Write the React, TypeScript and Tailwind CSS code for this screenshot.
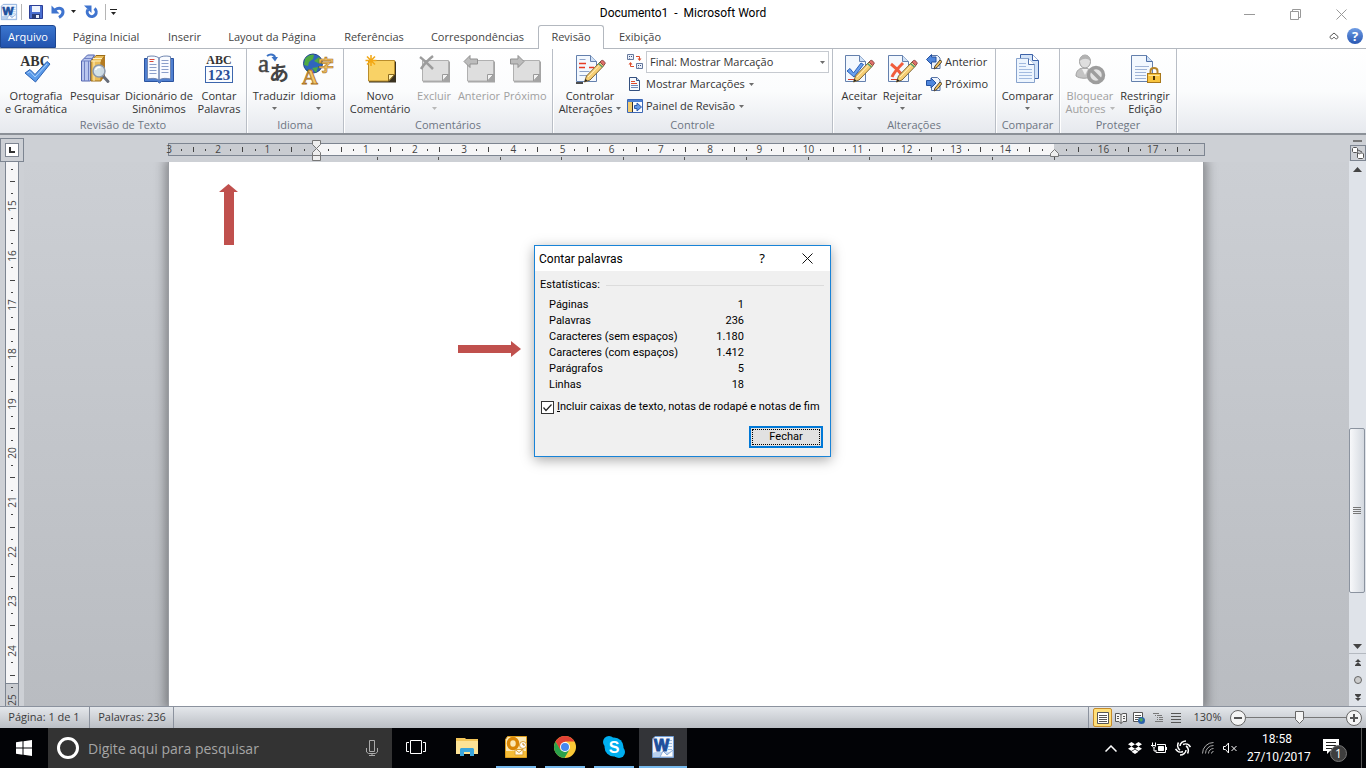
import type { ReactNode } from "react";

const quickAccess = "flex items-center justify-center";

function Caret({ className = "text-[#6d6d6d]" }: { className?: string }) {
  return (
    <svg viewBox="0 0 5 3" className={`h-[3px] w-[5px] shrink-0 ${className}`} fill="currentColor">
      <path d="M0 0h5L2.5 3z" />
    </svg>
  );
}

/* ---------- Icons ---------- */

function WordMark({ className }: { className: string }) {
  return (
    <svg viewBox="0 0 22 22" className={`overflow-visible ${className}`}>
      <path d="M3 .5h18.500v21H.5V3z" fill="#f1f6fd" stroke="#6f9bd3" />
      <path d="M16 4.500h4M16 7.500h4M16 10.500h4M16 13.500h4" stroke="#9cb9dd" />
      <path d="M1 17c6-3 12 1 20-2v6H1z" fill="#b9d0ee" />
      <path d="M11 15l4 4 6-5v7H8z" fill="#fff" stroke="#8fb0dc" />
      <text x="9.500" y="14.500" textAnchor="middle" fontFamily="Liberation Sans, sans-serif" fontWeight="bold" fontSize="16" fill="#1c4f9c" stroke="#1c4f9c">W</text>
    </svg>
  );
}

function SpellIcon() {
  return (
    <svg viewBox="0 0 32 32" className="size-8 overflow-visible">
      <text x="15" y="13" textAnchor="middle" fontFamily="Liberation Serif, serif" fontWeight="bold" fontSize="14" fill="#333">ABC</text>
      <path d="M5 20l5-3.500 5 5L27 8.500l3 2.500-14.500 18z" fill="#5b9bea" stroke="#2c62b4" />
      <path d="M7.500 20l2.500-1.500 5 5.500 12-13" fill="none" stroke="#a9d0fb" />
    </svg>
  );
}

function ResearchIcon() {
  return (
    <svg viewBox="0 0 32 32" className="size-8">
      <path d="M2.500 8l6-6h7l-4 6v20h-9z" fill="#b9c6ee" stroke="#5566b0" />
      <path d="M3 8h9l4-6M5.500 8v20M9.500 8v20M5 5.500h9" fill="none" stroke="#6f80c4" />
      <path d="M12 8l5-5.500h9l-4 5.500v20H12z" fill="#eabc58" stroke="#9a6c18" />
      <path d="M22 8l4-5.500v21l-4 4.500z" fill="#b47b22" />
      <path d="M12 8h10M15 8v20M14 5.500h9" fill="none" stroke="#fff0bf" />
      <path d="M24 23l5 5.500" stroke="#666c78" strokeWidth="3" strokeLinecap="round" />
      <circle cx="20" cy="18" r="6" fill="#cfe4f8" fillOpacity=".9" stroke="#8c98aa" strokeWidth="1.500" />
      <path d="M16.500 17c1-2.500 3-3 5-2.500" fill="none" stroke="#fff" strokeWidth="1.500" />
    </svg>
  );
}

function ThesaurusIcon() {
  return (
    <svg viewBox="0 0 32 32" className="size-8">
      <path d="M1.500 5.500h29v23h-12l-2 1.500-2-1.500h-13z" fill="#4f7fd0" stroke="#2a539f" />
      <path d="M4.500 3.500c5-1 9-.5 11.500 1.500v22c-3-2-7-2-11.500-1zM27.500 3.500c-5-1-9-.5-11.500 1.500v22c3-2 7-2 11.500-1z" fill="#f9fbff" stroke="#7086b0" />
      <path d="M6.500 11.500h7M6.500 14.500h7M6.500 17.500h7M6.500 20.500h7M18.500 7.500h7M18.500 10.500h7M18.500 13.500h7M18.500 16.500h7M18.500 19.500h7" stroke="#8b9fca" />
      <path d="M6.500 6.500h5M6.500 8.500h4" stroke="#d8483a" />
    </svg>
  );
}

function CountIcon() {
  return (
    <svg viewBox="0 0 32 32" className="size-8 overflow-visible">
      <text x="16" y="11" textAnchor="middle" fontFamily="Liberation Serif, serif" fontWeight="bold" fontSize="12" fill="#333">ABC</text>
      <rect x="2.500" y="13.500" width="27" height="16" fill="#fafcff" stroke="#3c66ad" />
      <text x="16" y="27" textAnchor="middle" fontFamily="Liberation Serif, serif" fontWeight="bold" fontSize="15" fill="#2c4f98">123</text>
    </svg>
  );
}

function TranslateIcon() {
  return (
    <svg viewBox="0 0 32 32" className="size-8 overflow-visible">
      <text x="0" y="19" fontFamily="Liberation Serif, serif" fontSize="25" fill="#444" stroke="#444" strokeWidth=".5">a</text>
      <text x="11" y="28" fontFamily="Noto Sans CJK JP, sans-serif" fontSize="20" fontWeight="bold" fill="#444">あ</text>
      <path d="M9 3c4-3 8-1 8 2" fill="none" stroke="#3b72c4" strokeWidth="2" />
      <path d="M13.500 4h6.500l-3 4.500z" fill="#3b72c4" />
    </svg>
  );
}

function LanguageIcon() {
  return (
    <svg viewBox="0 0 32 32" className="size-8 overflow-visible">
      <circle cx="11" cy="10.500" r="9.500" fill="#2f65bd" stroke="#1d4288" />
      <path d="M3 6c2-3 6-5 9-4l-1 4-4 3-1 4-4-1zM12 8l5-4 3 4-2 3zM10 15l6-1-2 6z" fill="#4faa43" />
      <text x="16" y="18" fontFamily="Noto Sans CJK JP, sans-serif" fontSize="16" fontWeight="bold" fill="#f0c266" stroke="#a9701c" strokeWidth=".6">字</text>
      <text x="0" y="31" fontFamily="Liberation Serif, serif" fontSize="22" fontWeight="bold" fill="#f3c668" stroke="#a9701c" strokeWidth=".8">A</text>
    </svg>
  );
}

function Note({ kind }: { kind: "new" | "delete" | "prev" | "next" }) {
  const isNew = kind === "new";
  return (
    <svg viewBox="0 0 32 32" className="size-8">
      <path d="M5 8.500h27v21H5z" fill={isNew ? "#3a3220" : "#a4a4a4"} />
      <path d="M4.500 7.500h26v14l-6 6.500h-20z" fill={isNew ? "#f9d266" : "#dedede"} stroke={isNew ? "#b98d2c" : "#b0b0b0"} />
      <path d="M30.500 21.500h-6v6.500z" fill={isNew ? "#fff0b0" : "#f2f2f2"} stroke={isNew ? "#8a6a20" : "#9a9a9a"} />
      {kind === "new" && (
        <path d="M7 2v11M1.500 7.500h11M3 3.500l8 8M11 3.500l-8 8" stroke="#f2a714" strokeWidth="1.500" />
      )}
      {kind === "delete" && (
        <path d="M2 4c4 3 9 8 13 12M15 3C10 7 6 11 3 16" fill="none" stroke="#9c9c9c" strokeWidth="2.500" />
      )}
      {kind === "prev" && <path d="M1 8.500l6-6V6h7.500v5H7v3.500z" fill="#bcbcbc" stroke="#919191" />}
      {kind === "next" && <path d="M15 8.500l-6-6V6H1.500v5H9v3.500z" fill="#bcbcbc" stroke="#919191" />}
    </svg>
  );
}

function PageWithPencil({ mark }: { mark: "track" | "accept" | "reject" }) {
  return (
    <svg viewBox="0 0 32 32" className="size-8">
      <path d="M2.500 2.500h14l6 6v20h-20z" fill="#f3f8fe" stroke="#6480ad" />
      <path d="M16.500 2.500v6h6" fill="#cfe0f5" stroke="#6480ad" />
      {mark === "track" && (
        <>
          <path d="M5.500 6.500h6M5.500 18.500h10M5.500 22.500h8" stroke="#8ea3c8" />
          <path d="M5 10.500h7M15 14.500h5M5 14.500h6" stroke="#e63b24" strokeWidth="1.500" />
          <path d="M2 30h7" stroke="#111" strokeWidth="1.500" />
        </>
      )}
      {mark === "accept" && <path d="M4 18l3-2.500 3.500 4.500L18 10l2.500 1.500L11 24z" fill="#6aa1ef" stroke="#2b60b8" />}
      {mark === "reject" && (
        <path d="M5 11c4 3 8 7 12 12M17 10C13 14 8 19 6 24" fill="none" stroke="#f05c3c" strokeWidth="3" />
      )}
      {mark !== "track" && <path d="M5 26.500h6" stroke="#d63b2b" />}
      <path d="M10.500 29l2-6L26 9l4 3.500L16 27z" fill="#f7cf74" stroke="#7d6433" />
      <path d="M14 24L27 10.500" stroke="#fff0c0" />
      <path d="M26 9l1.500-1.500c1-1 4.500 2 3.500 3.500l-1.500 1.500z" fill="#e0706b" stroke="#8b4b48" />
      <path d="M24.500 10.500l4 3.500" stroke="#4d9d70" strokeWidth="1.500" />
      <path d="M10.500 29l1-3 2 1.500z" fill="#222" />
    </svg>
  );
}

function CompareIcon() {
  return (
    <svg viewBox="0 0 32 32" className="size-8">
      <path d="M8.500 1.500h12l6 6v18h-18z" fill="#d3e3f8" stroke="#3c62a8" />
      <path d="M20.500 1.500v6h6" fill="#fff" stroke="#3c62a8" />
      <path d="M4.500 5.500h12l6 6v18h-18z" fill="#edf5fe" stroke="#87a2cc" />
      <path d="M16.500 5.500v6h6" fill="#fff" stroke="#5273ad" />
      <path d="M7 10.500h7M7 13.500h7M7 16.500h13M7 19.500h13M7 22.500h13M7 25.500h13" stroke="#a3bbe0" />
    </svg>
  );
}

function BlockAuthorsIcon() {
  return (
    <svg viewBox="0 0 32 32" className="size-8">
      <path d="M2 23c0-6 4-8 8-8s8 2 8 8c-4 3-12 3-16 0z" fill="#c4c4c4" stroke="#a2a2a2" />
      <path d="M8 16l3 6 3-6" fill="#f0f0f0" />
      <ellipse cx="11" cy="8.500" rx="5.500" ry="6.500" fill="#dedede" stroke="#9f9f9f" />
      <path d="M5.500 8c0-8 11-8 11 0-3-3-7-3-11 0z" fill="#b2b2b2" />
      <circle cx="22" cy="22" r="7.500" fill="#e2e2e2" stroke="#9d9d9d" strokeWidth="3.500" />
      <path d="M17 17l10 10" stroke="#9d9d9d" strokeWidth="3.500" />
    </svg>
  );
}

function RestrictIcon() {
  return (
    <svg viewBox="0 0 32 32" className="size-8">
      <path d="M2.500 2.500h15l6 6v20h-21z" fill="#f3f8fe" stroke="#6480ad" />
      <path d="M17.500 2.500v6h6" fill="#cfe0f5" stroke="#4d6fa8" />
      <path d="M6 13.500h14M6 16.500h12M6 19.500h11M6 22.500h11M6 25.500h11" stroke="#a0b4d6" />
      <path d="M21.500 21v-3c0-4 7-4 7 0v3" fill="none" stroke="#b8862a" strokeWidth="2" />
      <rect x="18.500" y="20.500" width="13" height="9" fill="#f8c43e" stroke="#a8771a" />
      <path d="M19.500 22.500h11" stroke="#ffe79a" />
      <path d="M24 23h2v4h-2z" fill="#4b3200" />
    </svg>
  );
}

function DisplayIcon() {
  return (
    <svg viewBox="0 0 16 16" className="size-4 shrink-0">
      <path d="M.5.500h6v5h-6zM9.500 9.500h6v5h-6z" fill="#eaf0fa" stroke="#66799d" />
      <path d="M2 2h1v1H2zM4 2h1v1H4zM2 4h1v.500H2zM11 11h1v1h-1zM13 11h1v1h-1zM11 13h1v.500h-1z" fill="#39507f" />
      <path d="M9 2.500h3.500V5M7 12.500H3.500V10" fill="none" stroke="#dc4a28" />
      <path d="M10.500 4.500h4l-2 2.500zM1.500 10.500h4l-2-2.500z" fill="#dc4a28" />
    </svg>
  );
}

function MarkupIcon() {
  return (
    <svg viewBox="0 0 16 16" className="size-4 shrink-0">
      <path d="M2.500 1.500h7l3 3v10h-10z" fill="#f6f9fe" stroke="#34507f" />
      <path d="M9.500 1.500v3h3" fill="#c9d8ef" stroke="#34507f" />
      <path d="M4 5.500h4M4 7.500h6" stroke="#dd4a2c" />
      <path d="M4 9.500h7M4 11.500h7" stroke="#6f88b8" />
    </svg>
  );
}

function PaneIcon() {
  return (
    <svg viewBox="0 0 16 16" className="size-4 shrink-0">
      <path d="M.5 1.500h15v13H.5z" fill="#fbfcff" stroke="#3a66b4" />
      <path d="M1 2h14v2H1z" fill="#4c7fd2" />
      <path d="M1 4h4v10H1z" fill="#f3cc70" />
      <path d="M5.500 4v10" stroke="#333" />
      <path d="M7.500 7.500H10V5l4.500 4-4.500 4v-2.500H7.500z" fill="#6498e6" stroke="#2d5aab" />
    </svg>
  );
}

function StepIcon({ back = false }: { back?: boolean }) {
  return (
    <svg viewBox="0 0 16 16" className="size-4 shrink-0">
      <path d="M5.500 1.500h6l2.500 2.500v10.500H5.500z" fill="#eff4fc" stroke="#5a76a6" />
      <path d="M8 15l1-3 5-6 2 1.500-5 6z" fill="#f2c15b" stroke="#4d4335" />
      {back ? (
        <path d="M.5 5.500l5-5V3H10v5H5.500v2.500z" fill="#4f86dc" stroke="#2451a0" />
      ) : (
        <path d="M10 7L5 2v2.500H.5v5H5V12z" fill="#4f86dc" stroke="#2451a0" />
      )}
    </svg>
  );
}

/* ---------- Ribbon ---------- */

const tabs = ["Página Inicial", "Inserir", "Layout da Página", "Referências", "Correspondências", "Revisão", "Exibição"];

const tabWidths: Record<string, string> = {
  "Página Inicial": "w-[100px]",
  Inserir: "w-[57px]",
  "Layout da Página": "w-[118px]",
  Referências: "w-[86px]",
  Correspondências: "w-[121px]",
  Revisão: "w-[66px]",
  Exibição: "w-[72px]",
};

function Group({ title, width, children }: { title: string; width: string; children: ReactNode }) {
  return (
    <section className={`flex shrink-0 flex-col border-r border-[#b9bec6] shadow-[1px_0_0_#fff] ${width}`}>
      <div className="flex h-[69px] items-start justify-center pt-[2px]">{children}</div>
      <h2 className="text-center leading-4 text-[#6d7582]">{title}</h2>
    </section>
  );
}

type BigProps = {
  icon: ReactNode;
  top: string;
  bottom?: string;
  caret?: boolean;
  disabled?: boolean;
  width: string;
};

function BigButton({ icon, top, bottom, caret, disabled, width }: BigProps) {
  return (
    <button
      disabled={disabled}
      className={`flex shrink-0 flex-col items-center pt-[2px] leading-[13px] whitespace-nowrap ${width} ${disabled ? "text-[#a0a0a0]" : "text-[#333]"}`}
    >
      {icon}
      <span className="mt-1">{top}</span>
      <span className="flex h-[13px] items-center gap-1">
        {bottom}
        {caret && <Caret className={disabled ? "text-[#b8b8b8]" : "text-[#6d6d6d]"} />}
      </span>
    </button>
  );
}

function SmallButton({ icon, label, caret }: { icon: ReactNode; label: string; caret?: boolean }) {
  return (
    <button className="flex h-[22px] items-center gap-[3px] whitespace-nowrap text-[#333]">
      {icon}
      <span>{label}</span>
      {caret && <span className="pl-px"><Caret /></span>}
    </button>
  );
}

function Ribbon() {
  return (
    <div className="flex h-[86px] shrink-0 border-b-2 border-[#8b9097] bg-linear-to-b from-white via-[#fbfcfd] to-[#e6e9ee]">
      <Group title="Revisão de Texto" width="w-[247px]">
        <BigButton icon={<SpellIcon />} top="Ortografia" bottom="e Gramática" width="w-[64px]" />
        <BigButton icon={<ResearchIcon />} top="Pesquisar" width="w-[54px]" />
        <BigButton icon={<ThesaurusIcon />} top="Dicionário de" bottom="Sinônimos" width="w-[74px]" />
        <BigButton icon={<CountIcon />} top="Contar" bottom="Palavras" width="w-[46px]" />
      </Group>
      <Group title="Idioma" width="w-[97px]">
        <BigButton icon={<TranslateIcon />} top="Traduzir" caret width="w-[46px]" />
        <BigButton icon={<LanguageIcon />} top="Idioma" caret width="w-[42px]" />
      </Group>
      <Group title="Comentários" width="w-[209px]">
        <BigButton icon={<Note kind="new" />} top="Novo" bottom="Comentário" width="w-[64px]" />
        <BigButton icon={<Note kind="delete" />} top="Excluir" caret disabled width="w-[44px]" />
        <BigButton icon={<Note kind="prev" />} top="Anterior" disabled width="w-[46px]" />
        <BigButton icon={<Note kind="next" />} top="Próximo" disabled width="w-[46px]" />
      </Group>
      <Group title="Controle" width="w-[280px]">
        <BigButton icon={<PageWithPencil mark="track" />} top="Controlar" bottom="Alterações" caret width="w-[74px]" />
        <div className="flex flex-col pr-[3px]">
          <div className="flex h-[22px] items-center gap-[3px]">
            <DisplayIcon />
            <span className="flex h-[22px] w-[183px] items-center border border-[#c6cad0] bg-white pr-[3px]">
              <select aria-label="Exibir para revisão" className="min-w-0 flex-1 appearance-none bg-transparent pl-[3px] text-[#333] outline-none">
                <option>Final: Mostrar Marcação</option>
              </select>
              <Caret />
            </span>
          </div>
          <SmallButton icon={<MarkupIcon />} label="Mostrar Marcações" caret />
          <SmallButton icon={<PaneIcon />} label="Painel de Revisão" caret />
        </div>
      </Group>
      <Group title="Alterações" width="w-[163px]">
        <BigButton icon={<PageWithPencil mark="accept" />} top="Aceitar" caret width="w-[43px]" />
        <BigButton icon={<PageWithPencil mark="reject" />} top="Rejeitar" caret width="w-[43px]" />
        <div className="flex flex-col px-[2px]">
          <SmallButton icon={<StepIcon back />} label="Anterior" />
          <SmallButton icon={<StepIcon />} label="Próximo" />
        </div>
      </Group>
      <Group title="Comparar" width="w-[64px]">
        <BigButton icon={<CompareIcon />} top="Comparar" caret width="w-[58px]" />
      </Group>
      <Group title="Proteger" width="w-[117px]">
        <BigButton icon={<BlockAuthorsIcon />} top="Bloquear" bottom="Autores" caret disabled width="w-[54px]" />
        <BigButton icon={<RestrictIcon />} top="Restringir" bottom="Edição" width="w-[56px]" />
      </Group>
    </div>
  );
}

function TitleBar() {
  return (
    <header className="grid h-[25px] shrink-0 grid-cols-[1fr_auto_1fr] items-center">
      <div className="flex items-center pb-[2px] pl-px">
        <WordMark className="size-4" />
        <span className="ml-1 h-4 w-px bg-[#b5b5b5]" />
        <button aria-label="Salvar" className={`${quickAccess} ml-[7px]`}>
          <svg viewBox="0 0 14 14" className="size-[14px]">
            <path d="M.5.500h13v13h-13z" fill="#4a6fd0" stroke="#2d3f96" />
            <path d="M3 1h8v6H3z" fill="#eef3fc" />
            <path d="M3 9h8v5H3z" fill="#283c78" />
            <path d="M7 10h3v3H7z" fill="#e7edf9" />
          </svg>
        </button>
        <button aria-label="Desfazer" className={`${quickAccess} ml-2 gap-[6px]`}>
          <svg viewBox="0 0 14 14" className="size-[14px]">
            <path d="M4 5c4-3 8-1.500 8 2 0 2.500-1.500 4-4 5.500" fill="none" stroke="#3f74cf" strokeWidth="3" />
            <path d="M.5.500v8h8z" fill="#3f74cf" />
          </svg>
          <Caret className="text-[#222]" />
        </button>
        <button aria-label="Refazer" className={`${quickAccess} ml-2`}>
          <svg viewBox="0 0 14 14" className="size-[14px]">
            <path d="M4 4.500A4.500 4.500 0 1 0 10.500 3.500" fill="none" stroke="#3f74cf" strokeWidth="3" />
            <path d="M0 .5h7.500V8z" fill="#3f74cf" />
          </svg>
        </button>
        <span className="ml-[7px] h-4 w-px bg-[#b5b5b5]" />
        <button aria-label="Personalizar" className="ml-1 flex flex-col items-center gap-[2px]">
          <span className="h-px w-[7px] bg-[#222]" />
          <Caret className="text-[#222]" />
        </button>
      </div>
      <h1 className="font-[Roboto,sans-serif] text-[12px] text-black">Documento1&nbsp; -&nbsp; Microsoft Word</h1>
      <div className="flex items-center justify-end gap-[35px] pt-[3px] pr-[19px] text-[#999]">
        <button aria-label="Minimizar">
          <svg viewBox="0 0 11 11" className="size-[11px]" stroke="currentColor"><path d="M0 5.500h11" /></svg>
        </button>
        <button aria-label="Restaurar">
          <svg viewBox="0 0 11 11" className="size-[11px]" fill="none" stroke="currentColor">
            <path d="M.5 2.500h8v8h-8zM2.500 2.500v-2h8v8h-2" />
          </svg>
        </button>
        <button aria-label="Fechar janela">
          <svg viewBox="0 0 11 11" className="size-[11px]" stroke="currentColor"><path d="M.5.500l10 10M10.500.500l-10 10" /></svg>
        </button>
      </div>
    </header>
  );
}

function TabBar() {
  return (
    <nav className="flex h-6 shrink-0 items-stretch border-b border-[#b3b8bf]">
      <button className="w-14 rounded-tr-[3px] border border-[#1d4690] bg-linear-to-b from-[#3b76cf] to-[#2353ae] pt-px text-white">
        Arquivo
      </button>
      <div className="flex">
        {tabs.map((tab) => (
          <button
            key={tab}
            className={
              tab === "Revisão"
                ? `-mb-px rounded-t-[3px] border border-b-0 border-[#b3b8bf] bg-white text-[#444] ${tabWidths[tab]}`
                : `pt-[2px] text-[#444] ${tabWidths[tab]}`
            }
          >
            {tab}
          </button>
        ))}
      </div>
      <div className="ml-auto flex items-center gap-2 pr-[3px] pb-px">
        <button aria-label="Minimizar a faixa de opções">
          <svg viewBox="0 0 10 8" className="h-2 w-[10px]" fill="#fff" stroke="#555">
            <path d="M1 4.500L5 1l4 3.500c0 3-2.500 3-4 .5-1.500 2.500-4 2.500-4-.5z" />
          </svg>
        </button>
        <button aria-label="Ajuda" className="size-4 rounded-full bg-linear-to-b from-[#6f9ce4] to-[#2857b3] text-[13px] leading-4 font-bold text-white">
          ?
        </button>
      </div>
    </nav>
  );
}

/* ---------- Rulers ---------- */

// one entry for each quarter of a centimetre
function quarters(labels: (number | string)[]) {
  return labels.flatMap((label) => [String(label), "dot", "half", "dot"]);
}

const acrossMarks = quarters([3, 2, 1, "", 1, 2, 3, 4, 5, 6, 7, 8, 9, 10, 11, 12, 13, 14, "", 16, 17]);
const downMarks = ["dot", "half", "dot", ...quarters([15, 16, 17, 18, 19, 20, 21, 22, 23, 24]), "25"];

function AcrossRuler() {
  return (
    <div className="relative mr-36 ml-36 flex-1 pt-2">
      <div className="flex h-[13px] items-center border border-[#7d8591] bg-[linear-gradient(to_right,#c9ccd1_148px,#f6f6f7_148px,#f6f6f7_885px,#c9ccd1_885px)] pr-[2px] text-[10px] leading-[11px] text-[#444]">
        {acrossMarks.map((mark, index) => (
          <span key={index} className="flex-1">
            <span className="flex w-0 justify-center">
              {mark === "dot" && <i className="h-[2px] w-px shrink-0 bg-[#444]" />}
              {mark === "half" && <i className="h-[5px] w-px shrink-0 bg-[#444]" />}
              {mark !== "dot" && mark !== "half" && mark}
            </span>
          </span>
        ))}
      </div>
      <div className="mr-[150px] ml-[148px] flex pt-px">
        {Array.from({ length: 12 }, (_, index) => (
          <i key={index} className="h-[3px] flex-1 border-r border-[#555]" />
        ))}
      </div>
      <svg viewBox="0 0 9 22" className="absolute top-[5px] left-36 h-[22px] w-[9px]" fill="#eee" stroke="#777">
        <path d="M.5.500h8v4l-4 4-4-4zM4.500 8.500l4 4v3h-8v-3zM.5 15.500h8v5h-8z" />
      </svg>
      <svg viewBox="0 0 9 8" className="absolute top-[14px] right-[146px] h-2 w-[9px]" fill="#eee" stroke="#777">
        <path d="M4.500.500l4 4v3h-8v-3z" />
      </svg>
    </div>
  );
}

function DownRuler() {
  return (
    <div className="ml-[5px] flex w-[14px] flex-1 flex-col border-x border-[#7d8591] bg-[linear-gradient(to_bottom,#f6f6f7_521px,#7d8591_521px,#7d8591_522px,#c9ccd1_522px)] pt-px text-[10px] leading-none text-[#444]">
      {downMarks.map((mark, index) => (
        <span key={index} className="flex min-h-0 flex-1 items-center justify-center">
          {mark === "dot" && <i className="h-px w-[2px] bg-[#444]" />}
          {mark === "half" && <i className="h-px w-[5px] bg-[#444]" />}
          {mark !== "dot" && mark !== "half" && <b className="-rotate-90 font-normal">{mark}</b>}
        </span>
      ))}
    </div>
  );
}

function ScrollBar() {
  return (
    <aside className="flex w-[17px] shrink-0 flex-col items-center bg-[#dfe3e9]">
      <div className="flex h-[26px] w-full flex-col items-center gap-[3px] bg-[#cdd0d5] pt-[5px]">
        <i className="h-[2px] w-[9px] shrink-0 bg-[#777]" />
        <button aria-label="Régua" className="flex size-4 shrink-0 items-center justify-center border border-[#7d8591]">
          <svg viewBox="0 0 12 12" className="size-3" fill="#fff" stroke="#555">
            <path d="M1.500.500h3l1 1v3l-1 1h-3l-1-1v-3zM5.500 5.500l2 1.500 1-1h2l1 1v3.500l-1 1h-4l-1-1zM6 3l4 2" />
          </svg>
        </button>
      </div>
      <button aria-label="Rolar para cima" className="flex h-4 items-center">
        <svg viewBox="0 0 9 5" className="h-[5px] w-[9px]" fill="#444"><path d="M0 5h9L4.500 0z" /></svg>
      </button>
      <div className="flex w-full flex-1 flex-col">
        <div className="flex-[252]" />
        <div className="mr-px flex flex-[163] flex-col items-center justify-center gap-px rounded-[2px] border border-[#8b939f] bg-linear-to-r from-[#f7f8fa] to-[#d4d9e0]">
          <i className="h-px w-2 bg-[#777]" />
          <i className="h-px w-2 bg-[#777]" />
          <i className="h-px w-2 bg-[#777]" />
          <i className="h-px w-2 bg-[#777]" />
        </div>
        <div className="flex-[46]" />
      </div>
      <button aria-label="Rolar para baixo" className="flex h-[15px] w-full items-center justify-center border-b border-[#b4b9c0]">
        <svg viewBox="0 0 9 5" className="h-[5px] w-[9px]" fill="#444"><path d="M0 0h9L4.500 5z" /></svg>
      </button>
      <button aria-label="Página anterior" className="flex h-[17px] items-center">
        <svg viewBox="0 0 6 7" className="h-[7px] w-[6px]" fill="#444"><path d="M0 3h6L3 0zM0 6h6L3 3zM0 6h6v1H0z" /></svg>
      </button>
      <button aria-label="Selecionar objeto" className="my-[5px] size-2 rounded-full border border-[#666] bg-[#ccc]" />
      <button aria-label="Próxima página" className="flex h-[17px] items-center">
        <svg viewBox="0 0 6 7" className="h-[7px] w-[6px]" fill="#444"><path d="M0 0h6v1H0zM0 1h6L3 4zM0 4h6L3 7z" /></svg>
      </button>
    </aside>
  );
}

/* ---------- Dialog ---------- */

const statistics = [
  ["Páginas", "1"],
  ["Palavras", "236"],
  ["Caracteres (sem espaços)", "1.180"],
  ["Caracteres (com espaços)", "1.412"],
  ["Parágrafos", "5"],
  ["Linhas", "18"],
];

function WordCountDialog() {
  return (
    <div
      role="dialog"
      aria-labelledby="dialog-title"
      className="absolute top-[245px] left-[534px] w-[297px] border border-[#1883d7] bg-[#f0f0f0] pb-2 font-[Roboto,sans-serif] text-[11px] text-black shadow-[0_3px_12px_rgba(0,0,0,0.35)]"
    >
      <div className="flex h-[25px] items-center bg-white pr-[17px] pl-1">
        <h2 id="dialog-title" className="flex-1 text-[12px]">Contar palavras</h2>
        <button aria-label="Ajuda" className="mr-[37px] font-['Noto_Sans'] text-[13px]">?</button>
        <button aria-label="Fechar caixa de diálogo">
          <svg viewBox="0 0 11 11" className="size-[11px]" stroke="#111"><path d="M.5.500l10 10M10.500.500l-10 10" /></svg>
        </button>
      </div>
      <div className="mt-[6px] flex items-center gap-[6px] pr-[6px] pl-[5px] leading-4">
        <span>Estatísticas:</span>
        <i className="h-px flex-1 bg-[#dcdcdc]" />
      </div>
      <table className="mt-1 ml-[14px] w-[195px] leading-4">
        <tbody>
          {statistics.map(([name, value]) => (
            <tr key={name}>
              <th scope="row" className="p-0 text-left font-normal whitespace-nowrap">{name}</th>
              <td className="p-0 text-right">{value}</td>
            </tr>
          ))}
        </tbody>
      </table>
      <label className="mt-[6px] flex items-center pl-[6px] leading-4 whitespace-nowrap">
        <span className="relative mr-[3px] size-[13px]">
          <input type="checkbox" defaultChecked className="block size-[13px] appearance-none border border-[#333] bg-white" />
          <svg viewBox="0 0 13 13" className="pointer-events-none absolute inset-0 size-[13px]" fill="none" stroke="#222" strokeWidth="1.200">
            <path d="M2.500 6.500L5 9.500l5.500-6" />
          </svg>
        </span>
        <span><u>I</u>ncluir caixas de texto, notas de rodapé e notas de fim</span>
      </label>
      <div className="mt-[11px] flex justify-end pr-[7px]">
        <button className="border-2 border-[#0078d7] bg-[#e1e1e1] p-px">
          <span className="block w-[68px] border border-dotted border-black leading-[14px]">Fechar</span>
        </button>
      </div>
    </div>
  );
}

/* ---------- Bottom bars ---------- */

function StatusBar() {
  return (
    <footer className="flex h-[22px] shrink-0 items-stretch border-t border-[#8b929e] bg-linear-to-b from-[#e4e7eb] to-[#bbbfc5] text-[#3b3b3b]">
      <button className="w-[90px] border-r border-[#8b929e] pr-[1px]">Página: 1 de 1</button>
      <button className="w-[84px] border-r border-[#8b929e] pl-px">Palavras: 236</button>
      <div className="ml-auto flex items-center border-l border-[#8b929e] pl-1">
        <button aria-label="Layout de impressão" className="flex h-[19px] w-[19px] items-center justify-center rounded-[2px] border border-[#c68b2a] bg-[#ffe07a]">
          <svg viewBox="0 0 12 12" className="size-3" fill="#fff" stroke="#555">
            <path d="M.5.500h11v11H.5zM2 3.500h8M2 5.500h8M2 7.500h8M2 9.500h8" />
          </svg>
        </button>
        <button aria-label="Leitura" className="ml-[3px]">
          <svg viewBox="0 0 12 12" className="size-3" fill="#f5f5f5" stroke="#555">
            <path d="M.5 1.500H4l2 1 2-1h3.500v8H8l-2 2-2-2H.5zM6 2.500v9M2 4.500h2M2 6.500h2M8 4.500h2M8 6.500h2" />
          </svg>
        </button>
        <button aria-label="Layout da Web" className="ml-[6px]">
          <svg viewBox="0 0 12 12" className="size-3">
            <path d="M.5.500h9v9h-9zM2 3.500h6M2 5.500h6M2 7.500h3" fill="#fff" stroke="#555" />
            <circle cx="8.500" cy="8.500" r="3.500" fill="#2c62ac" />
            <path d="M6 7l3-1 1 2-2 2z" fill="#52a957" />
          </svg>
        </button>
        <button aria-label="Estrutura de tópicos" className="ml-2">
          <svg viewBox="0 0 10 10" className="size-[10px]" stroke="#777">
            <path d="M0 .5h6M2 2.500h1M4 2.500h5M4 4.500h1M6 4.500h4M4 6.500h1M6 6.500h4M2 8.500h8" />
          </svg>
        </button>
        <button aria-label="Rascunho" className="ml-2">
          <svg viewBox="0 0 10 10" className="size-[10px]" stroke="#555">
            <path d="M0 .5h10M0 3.500h10M0 6.500h10M0 9.500h10" />
          </svg>
        </button>
        <button className="w-[49px] pl-1">130%</button>
        <button aria-label="Reduzir" className="flex size-4 items-center justify-center rounded-full border border-[#666] bg-[#f4f4f4]">
          <i className="h-[2px] w-2 bg-[#555]" />
        </button>
        <span className="relative flex h-4 w-[100px] items-center">
          <i className="h-px w-full bg-[#777]" />
          <input type="range" aria-label="Zoom" min="10" max="500" defaultValue="260" className="absolute inset-0 w-full opacity-0" />
          <svg viewBox="0 0 9 13" className="pointer-events-none absolute left-[49px] h-[13px] w-[9px]">
            <path d="M.5.500h8v8l-4 4-4-4z" fill="#f4f4f4" stroke="#666" />
          </svg>
        </span>
        <button aria-label="Ampliar" className="mr-1 flex size-4 items-center justify-center rounded-full border border-[#666] bg-[#f4f4f4]">
          <svg viewBox="0 0 8 8" className="size-2" stroke="#555" strokeWidth="2"><path d="M0 4h8M4 0v8" /></svg>
        </button>
      </div>
    </footer>
  );
}

function TaskButton({ label, open, active, children }: { label: string; open?: boolean; active?: boolean; children: ReactNode }) {
  return (
    <button
      aria-label={label}
      className={`mr-px flex h-10 w-12 items-center justify-center ${active ? "bg-[#333438]" : ""}`}
    >
      <span className={`flex h-10 items-center justify-center border-b-2 ${active ? "w-12" : "w-10"} ${open ? "border-[#76b9ed]" : "border-transparent"}`}>
        {children}
      </span>
    </button>
  );
}

function TaskBar() {
  return (
    <footer className="flex h-10 shrink-0 items-center bg-[#020306] text-white">
      <button aria-label="Iniciar" className="flex h-10 w-12 items-center justify-center">
        <svg viewBox="0 0 16 16" className="size-4" fill="#fff">
          <path d="M0 2.200L6.500 1.300v6.200H0zM7.500 1.200L16 0v7.500H7.500zM0 8.500h6.500v6.200L0 13.800zM7.500 8.500H16V16l-8.500-1.200z" />
        </svg>
      </button>
      <label className="flex h-10 w-[344px] items-center bg-[#333] pr-[14px] pl-[9px]">
        <span className="size-[22px] shrink-0 rounded-full border-[3px] border-white" />
        <input
          aria-label="Pesquisar no Windows"
          placeholder="Digite aqui para pesquisar"
          className="ml-[9px] min-w-0 flex-1 bg-transparent text-[14px] outline-none placeholder:text-[#a5a5a5]"
        />
        <svg viewBox="0 0 12 16" className="h-4 w-3" fill="none" stroke="#aaa">
          <path d="M3.500.500h5v11h-5zM.5 8v4l2 1.500h7l2-1.500V8M6 13.500v2M3 15.500h6" />
        </svg>
      </label>
      <TaskButton label="Visão de tarefas">
        <svg viewBox="0 0 20 14" className="h-[14px] w-5" fill="none" stroke="#fff">
          <path d="M4.500.500h11v13h-11zM3 2.500H.5v9H3M17 2.500h2.500v9H17" />
        </svg>
      </TaskButton>
      <div className="flex pl-[2px]">
        <TaskButton label="Explorador de Arquivos">
          <svg viewBox="0 0 22 18" className="h-[18px] w-[22px]">
            <path d="M0 0h9l1 1h12v14H0z" fill="#f3c65a" />
            <path d="M0 3h22v13H0z" fill="#fde396" />
            <path d="M4 18v-7l1-1h12l1 1v7h-4v-4H8v4z" fill="#3ba6dc" />
          </svg>
        </TaskButton>
        <TaskButton label="Outlook" open>
          <svg viewBox="0 0 22 22" className="size-[22px]">
            <path d="M2.500.500h19v21h-21v-18z" fill="#fce9b5" stroke="#dd9d1b" />
            <path d="M1 15h20v6H1z" fill="#f5bd37" />
            <ellipse cx="8" cy="7.500" rx="4.500" ry="5" fill="none" stroke="#d98605" strokeWidth="3.500" />
            <circle cx="18" cy="9" r="3.500" fill="#fff" stroke="#dba034" />
            <path d="M18 7v2h2" fill="none" stroke="#c88516" />
            <path d="M10 13.500h8v5.500h-8z" fill="#fffae9" stroke="#dba034" />
            <path d="M10 13.500l4 3 4-3" fill="none" stroke="#dba034" />
          </svg>
        </TaskButton>
        <TaskButton label="Chrome" open>
          <svg viewBox="0 0 22 22" className="size-[22px]">
            <circle cx="11" cy="11" r="11" fill="#fbc936" />
            <path d="M1.500 5.500a11 11 0 0 1 19 0H11L6 14z" fill="#e24135" />
            <path d="M1.500 5.500A11 11 0 0 0 10.500 22l5-8.500L6.300 13.800z" fill="#2ba14b" />
            <circle cx="11" cy="11" r="5" fill="#fff" />
            <circle cx="11" cy="11" r="4" fill="#4688f0" />
          </svg>
        </TaskButton>
        <TaskButton label="Skype" open>
          <svg viewBox="0 0 22 22" className="size-[22px]">
            <circle cx="6" cy="6" r="6" fill="#00aff0" />
            <circle cx="16" cy="16" r="6" fill="#00aff0" />
            <circle cx="11" cy="11" r="9.500" fill="#00aff0" />
            <text x="11" y="16.500" textAnchor="middle" fontFamily="Liberation Sans, sans-serif" fontWeight="bold" fontSize="16" fill="#fff">S</text>
          </svg>
        </TaskButton>
        <TaskButton label="Word" open active>
          <WordMark className="size-[22px]" />
        </TaskButton>
      </div>
      <div className="ml-auto flex items-center">
        <svg viewBox="0 0 12 7" className="h-[7px] w-3" fill="none" stroke="#fff" strokeWidth="1.500"><path d="M.5 6.500L6 1l5.500 5.500" /></svg>
        <svg viewBox="0 0 14 12" className="ml-[11px] h-3 w-[14px]" fill="#fff">
          <path d="M3.500 0L7 2.200 3.500 4.500 0 2.200zM10.500 0L14 2.200l-3.500 2.300L7 2.200zM3.500 4.500L7 6.800 3.500 9 0 6.800zM10.500 4.500L14 6.800 10.500 9 7 6.800zM3.500 9.800L7 7.600l3.500 2.200L7 12z" />
        </svg>
        <svg viewBox="0 0 16 12" className="ml-[9px] h-3 w-4" fill="none" stroke="#fff">
          <path d="M6 2.500h8.500v8H5V8M15.500 5v3M0 3.500h5M1.500.500v3c0 3 3 3 3 0v-3M3 6v3h2" />
          <path d="M7.500 4.500h5v4h-5z" fill="#fff" />
        </svg>
        <svg viewBox="0 0 16 16" className="ml-2 size-4" fill="none" stroke="#fff" strokeWidth="1.500">
          <path d="M5 6C5 3 8 1 11 1M8 4.500c3-1.500 6 0 7.500 2.500M11 6c2.500 1.500 3 5 1.500 7.500M11 10c0 3-3 5-6 5M8 11.500c-3 1.500-6 0-7.500-2.500M5 10C2.500 8.500 2 5 3.500 2.500" />
        </svg>
        <svg viewBox="0 0 12 12" className="ml-[11px] size-3" fill="none" stroke="#aaa">
          <path d="M.5 11.500a11 11 0 0 1 11-11M3.500 11.500a8 8 0 0 1 8-8M6.500 11.500a5 5 0 0 1 5-5M9.500 11.500a2 2 0 0 1 2-2" />
        </svg>
        <svg viewBox="0 0 14 12" className="ml-[9px] h-3 w-[14px]" fill="none" stroke="#fff">
          <path d="M.5 4.500h2l3-3.500v10l-3-3.500h-2zM8.500 4l5 5M13.500 4l-5 5" />
        </svg>
        <div className="ml-[10px] w-[60px] text-center font-[Roboto,sans-serif] text-[12px] leading-[18px]">
          <p>18:58</p>
          <p>27/10/2017</p>
        </div>
        <button aria-label="Notificações" className="ml-4 flex h-10 w-[38px] items-center pt-[3px]">
          <svg viewBox="0 0 24 24" className="size-6">
            <path d="M0 1h16v12H7l-3 3v-3H0z" fill="#fff" />
            <path d="M3 4.500h10M3 7.500h10M3 10.500h6" stroke="#222" />
            <circle cx="15.500" cy="15.500" r="8" fill="#3e3e3e" stroke="#777" />
            <text x="15.500" y="20" textAnchor="middle" fontFamily="Open Sans, sans-serif" fontSize="12" fill="#fff">1</text>
          </svg>
        </button>
        <i className="h-10 w-px bg-[#555]" />
        <i className="w-1" />
      </div>
    </footer>
  );
}

export default function App() {
  return (
    <div className="relative flex h-screen min-h-[480px] flex-col overflow-hidden bg-white font-['Open_Sans','Noto_Sans',sans-serif] text-[11px]">
      <TitleBar />
      <TabBar />
      <Ribbon />
      <div className="flex min-h-0 flex-1 bg-linear-to-b from-[#cdd0d5] to-[#b9bcc1]">
        <div className="flex w-6 shrink-0 flex-col bg-[#cdd0d5]">
          <div className="mt-[3px] flex size-6 items-center justify-center border border-[#7d8591]">
            <button aria-label="Tabulação" className="flex size-[14px] items-center justify-center border border-[#7d8591] bg-white">
              <i className="size-[6px] border-b-2 border-l-2 border-[#333]" />
            </button>
          </div>
          <DownRuler />
        </div>
        <main className="flex min-w-0 flex-1 flex-col">
          <div className="flex h-[27px] shrink-0 bg-[#cdd0d5]">
            <AcrossRuler />
          </div>
          <div className="flex min-h-0 flex-1 overflow-hidden">
            <article className="relative mr-[145px] ml-36 flex-1 border-x border-[#9a9da2] bg-white shadow-[0_0_10px_3px_rgba(0,0,0,0.35)]">
              <svg viewBox="0 0 20 62" className="absolute top-[22px] left-[50px] h-[62px] w-5" fill="#c0504d">
                <path d="M9.500 0L19 8h-4v53H5V8H0z" />
              </svg>
              <svg viewBox="0 0 64 16" className="absolute top-[179px] left-[289px] h-4 w-16" fill="#c0504d">
                <path d="M0 4h53V0l10 8-10 8v-4H0z" />
              </svg>
            </article>
          </div>
        </main>
        <ScrollBar />
      </div>
      <StatusBar />
      <TaskBar />
      <WordCountDialog />
    </div>
  );
}
